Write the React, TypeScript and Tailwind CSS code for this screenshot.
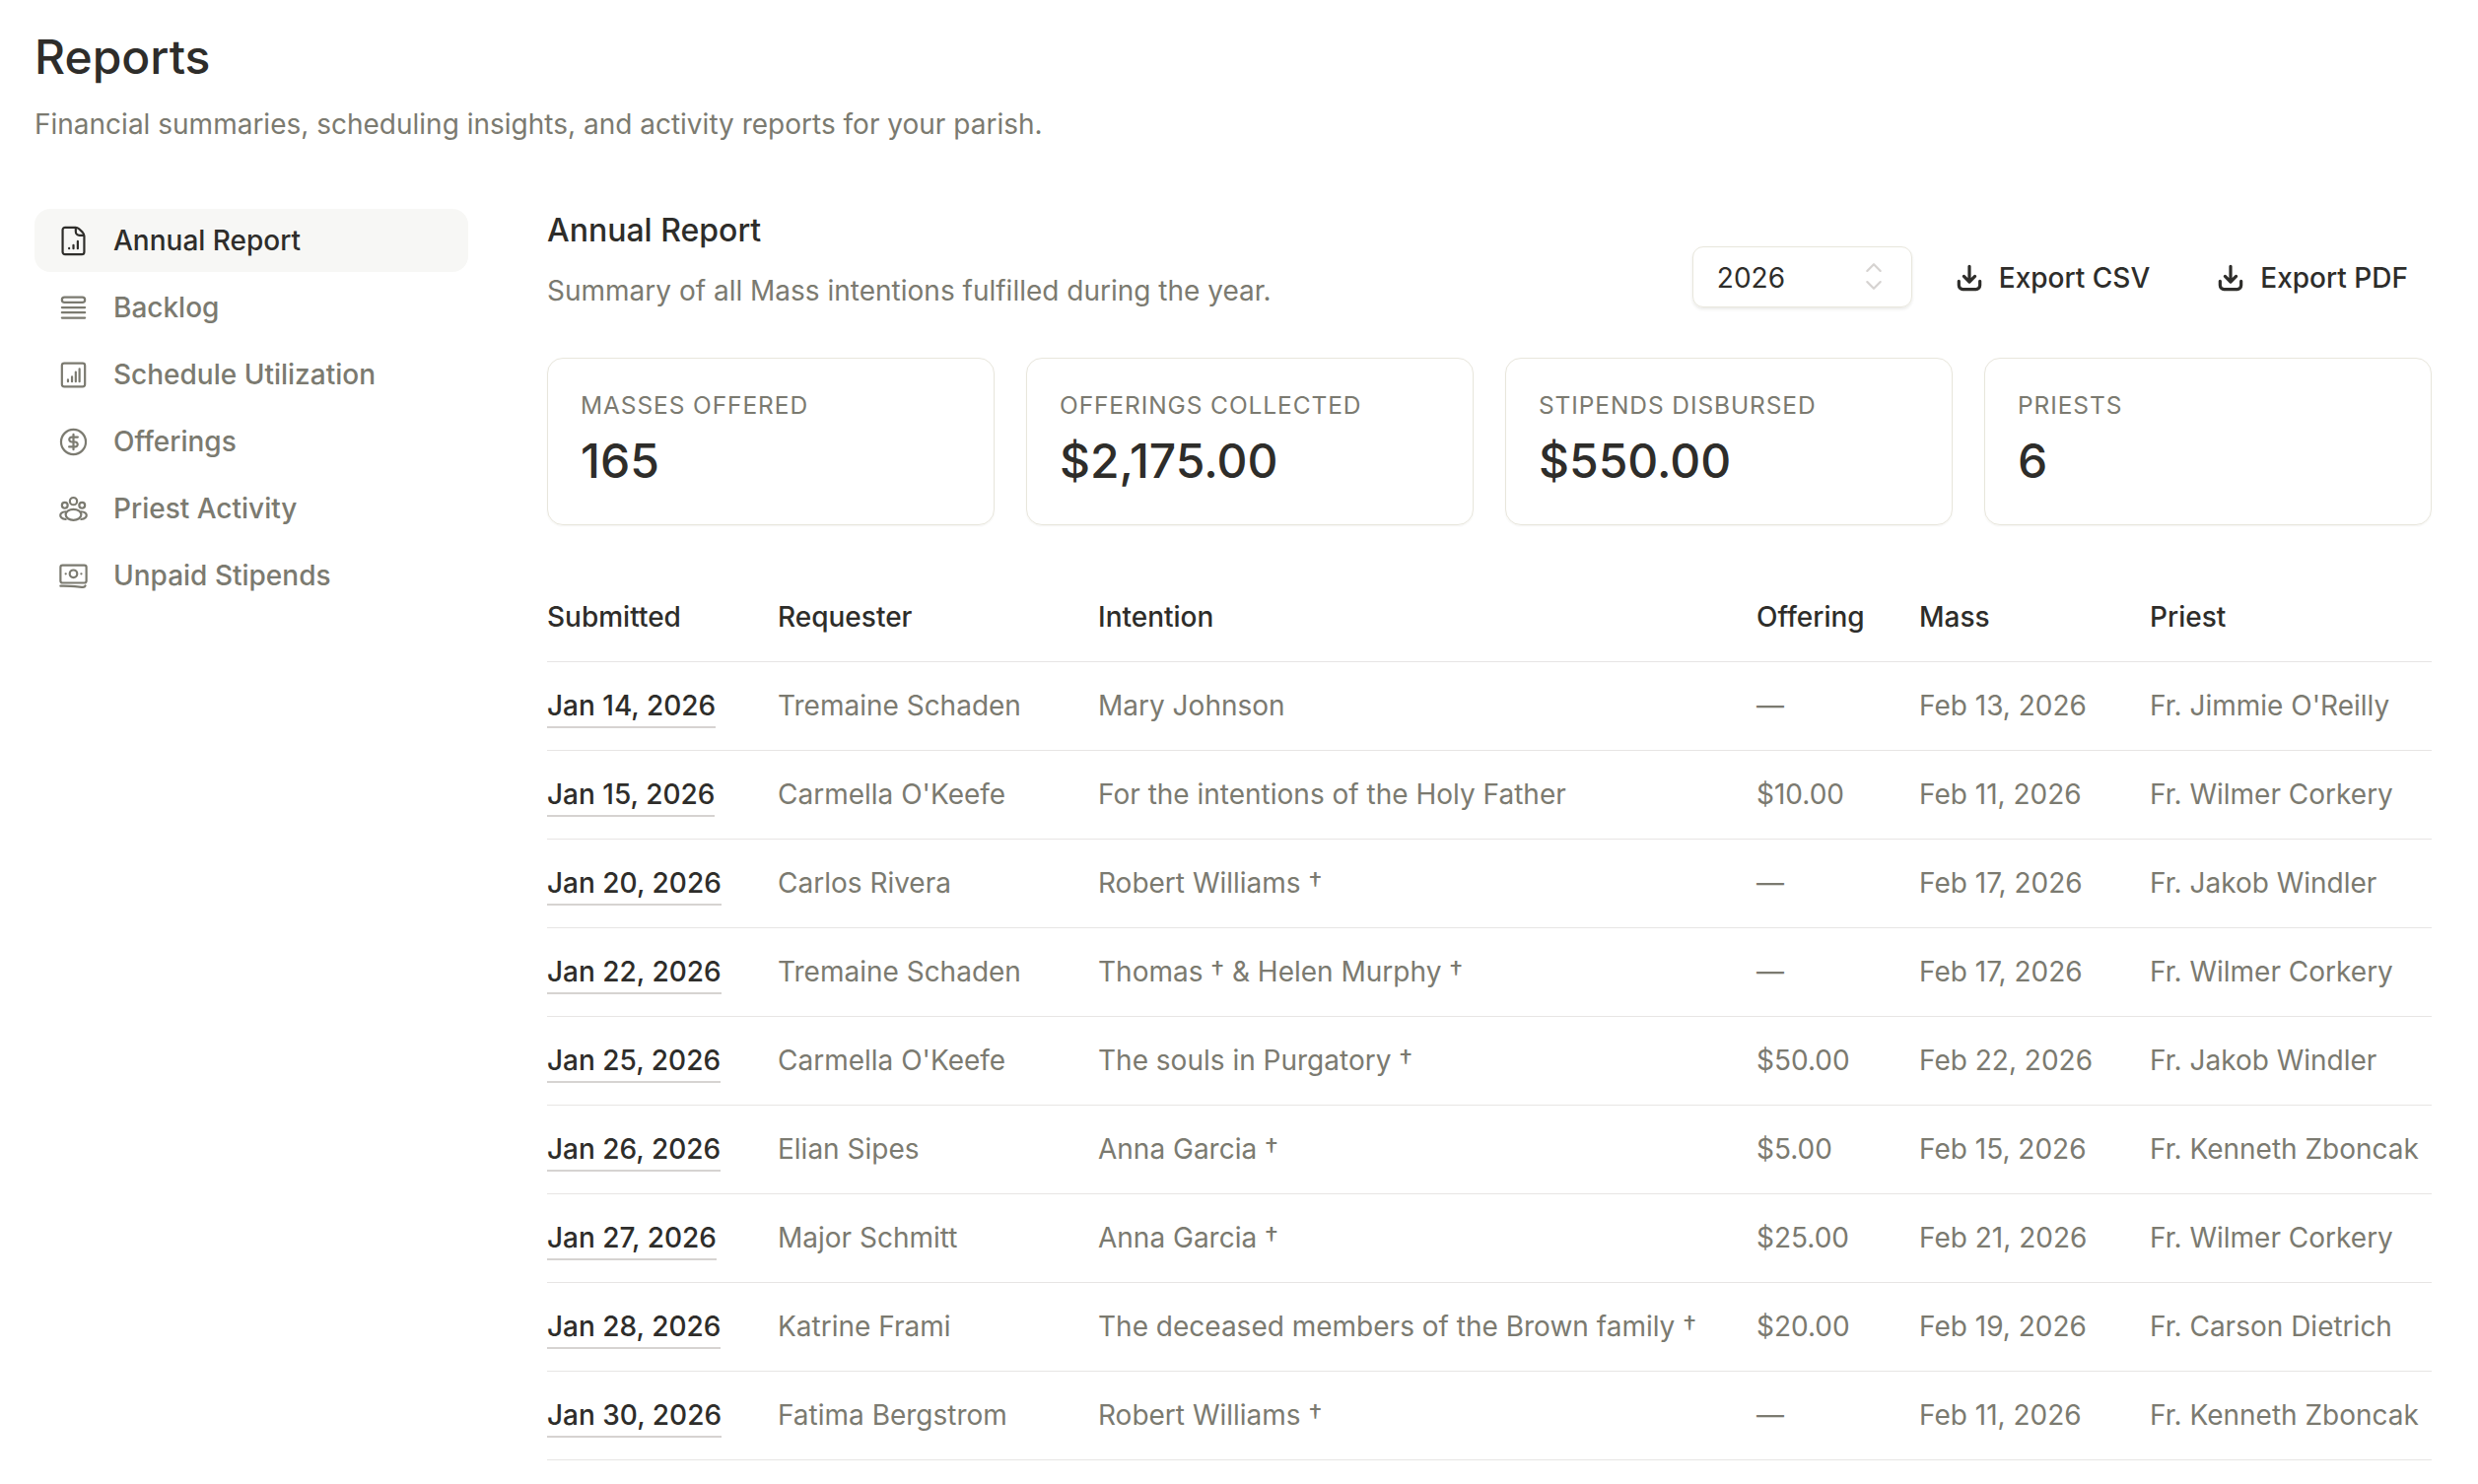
import React from "react";

const F = "[font-family:Inter,sans-serif]";

const Base = ({ children, className = "" }: { children: React.ReactNode; className?: string }) => (
  <svg viewBox="0 0 24 24" fill="none" stroke="currentColor" strokeWidth={1.5} strokeLinecap="round" strokeLinejoin="round" className={"w-[35px] h-[35px] shrink-0 " + className}>
    {children}
  </svg>
);

const IconDoc = () => (
  <Base>
    <path d="M13.5 2.6H6.2A1.7 1.7 0 0 0 4.5 4.3v15.4a1.7 1.7 0 0 0 1.7 1.7h11.6a1.7 1.7 0 0 0 1.7-1.7V8.6c0-1.2-.4-1.8-1.2-2.7l-2.4-2.3c-.8-.7-1.4-1-2.4-1Z" />
    <path d="M13.6 2.8v2.7a2.6 2.6 0 0 0 2.6 2.6h3" />
    <path d="M9 17.3v-.2M12 17.3v-2.4M15 17.3v-5" />
  </Base>
);
const IconBacklog = () => (
  <Base>
    <rect x="4" y="4.6" width="16" height="3.6" rx="1.8" />
    <path d="M4 11.7h16M4 15.2h16M4 18.9h16" />
  </Base>
);
const IconBars = () => (
  <Base>
    <rect x="4" y="3.9" width="16" height="16.2" rx="1.6" />
    <path d="M8.2 16.6v-1.2M11 16.6v-3.4M13.6 16.6V10M16.2 16.6V7.8" />
  </Base>
);
const IconDollar = () => (
  <Base>
    <circle cx="12" cy="12" r="8.6" />
    <path d="M15 8.6h-4.2a1.7 1.7 0 1 0 0 3.4h2.4a1.7 1.7 0 1 1 0 3.4H9M12 6.7v10.6" />
  </Base>
);
const IconGroup = () => (
  <Base>
    <circle cx="12" cy="6.6" r="2.5" />
    <circle cx="6" cy="9.5" r="2" />
    <circle cx="18" cy="9.5" r="2" />
    <ellipse cx="12" cy="16" rx="5.4" ry="3.8" />
    <path d="M6.6 13.9c-2.2.2-3.7 1.2-3.7 2.6s1.5 2.4 3.7 2.7M17.4 13.9c2.2.2 3.7 1.2 3.7 2.6s-1.5 2.4-3.7 2.7" />
  </Base>
);
const IconCash = () => (
  <Base>
    <rect x="3" y="4.6" width="18" height="12.2" rx="1.4" />
    <circle cx="12" cy="10.5" r="2.6" />
    <path d="M6.6 10.5h.1M17.4 10.5h.1" />
    <path d="M3 19c5-.3 11 .4 15.6.8.8 0 1.4-.2 1.7-1" />
  </Base>
);
const IconDownload = () => (
  <svg viewBox="0 0 24 24" fill="none" stroke="currentColor" strokeWidth={2.4} strokeLinecap="round" strokeLinejoin="round" className="w-[32px] h-[32px] shrink-0">
    <path d="M12 3.2v11.6M7.8 10.8l4.2 4.2 4.2-4.2" />
    <path d="M4 14.5v3.2a3 3 0 0 0 3 3h10a3 3 0 0 0 3-3v-3.2" />
  </svg>
);

const nav: [string, React.FC][] = [
  ["Annual Report", IconDoc],
  ["Backlog", IconBacklog],
  ["Schedule Utilization", IconBars],
  ["Offerings", IconDollar],
  ["Priest Activity", IconGroup],
  ["Unpaid Stipends", IconCash],
];

const stats = [
  ["MASSES OFFERED", "165"],
  ["OFFERINGS COLLECTED", "$2,175.00"],
  ["STIPENDS DISBURSED", "$550.00"],
  ["PRIESTS", "6"],
];

const rows: [string, string, string, string, string, string][] = [
  ["Jan 14, 2026", "Tremaine Schaden", "Mary Johnson", "—", "Feb 13, 2026", "Fr. Jimmie O'Reilly"],
  ["Jan 15, 2026", "Carmella O'Keefe", "For the intentions of the Holy Father", "$10.00", "Feb 11, 2026", "Fr. Wilmer Corkery"],
  ["Jan 20, 2026", "Carlos Rivera", "Robert Williams †", "—", "Feb 17, 2026", "Fr. Jakob Windler"],
  ["Jan 22, 2026", "Tremaine Schaden", "Thomas † & Helen Murphy †", "—", "Feb 17, 2026", "Fr. Wilmer Corkery"],
  ["Jan 25, 2026", "Carmella O'Keefe", "The souls in Purgatory †", "$50.00", "Feb 22, 2026", "Fr. Jakob Windler"],
  ["Jan 26, 2026", "Elian Sipes", "Anna Garcia †", "$5.00", "Feb 15, 2026", "Fr. Kenneth Zboncak"],
  ["Jan 27, 2026", "Major Schmitt", "Anna Garcia †", "$25.00", "Feb 21, 2026", "Fr. Wilmer Corkery"],
  ["Jan 28, 2026", "Katrine Frami", "The deceased members of the Brown family †", "$20.00", "Feb 19, 2026", "Fr. Carson Dietrich"],
  ["Jan 30, 2026", "Fatima Bergstrom", "Robert Williams †", "—", "Feb 11, 2026", "Fr. Kenneth Zboncak"],
];

export default function App() {
  return (
    <div className={F + " min-h-[1506px] bg-white text-[#2e2d2a] text-[28px] pl-[35px] pr-[47px] pt-[30px] overflow-hidden"}>
      <h1 className="text-[48px] leading-[56px] font-medium">Reports</h1>
      <p className="mt-[20px] leading-[40px] text-[#7b7a70]">Financial summaries, scheduling insights, and activity reports for your parish.</p>

      <div className="mt-[66px] flex gap-[80px]">
        <nav className="w-[440px] shrink-0 flex flex-col gap-[4px]">
          {nav.map(([label, Icon], i) => (
            <div key={label} className={"h-[64px] rounded-[16px] pl-[22px] flex items-center gap-[23px] font-medium " + (i === 0 ? "bg-[#f7f7f5] text-[#2e2d2a]" : "text-[#7b7a70]")}>
              <Icon />
              <span>{label}</span>
            </div>
          ))}
        </nav>

        <main className="flex-1 min-w-0">
          <div className="flex items-start justify-between">
            <div className="pt-[2px]">
              <h2 className="text-[32px] leading-[40px] font-medium">Annual Report</h2>
              <p className="mt-[21px] leading-[40px] text-[#7b7a70]">Summary of all Mass intentions fulfilled during the year.</p>
            </div>
            <div className="mt-[38px] flex items-center">
              <div className="relative w-[223px] h-[62px] rounded-[11px] border-[1.6px] border-[#e8e6dc] shadow-[0_2px_3px_rgba(60,60,40,0.1)] flex items-center pl-[24px] pt-[1px]">
                2026
                <svg viewBox="0 0 16 26" fill="none" stroke="#d6d3d1" strokeWidth={2} strokeLinecap="round" strokeLinejoin="round" className="absolute right-[29px] top-[15px] w-[18px] h-[29px]">
                  <path d="M2 8l6-6 6 6M2 18l6 6 6-6" />
                </svg>
              </div>
              <button className="ml-[26px] h-[62px] flex items-center gap-[14px] pl-[16px] pr-[25px] pt-[1px] font-medium">
                <IconDownload /> Export CSV
              </button>
              <button className="ml-[25px] h-[62px] flex items-center gap-[14px] pl-[16px] pr-[24px] pt-[1px] font-medium">
                <IconDownload /> Export PDF
              </button>
            </div>
          </div>

          <div className="mt-[48px] grid grid-cols-4 gap-[32px]">
            {stats.map(([k, v]) => (
              <div key={k} className="h-[170px] rounded-[16px] border-[1.6px] border-[#e8e6dc] shadow-[0_1px_2px_rgba(60,60,40,0.06)] px-[33px] pt-[31px]">
                <div className="text-[24.5px] leading-[32px] tracking-[0.9px] text-[#7b7a70]">{k}</div>
                <div className="mt-[9px] text-[48px] leading-[64px] font-medium">{v}</div>
              </div>
            ))}
          </div>

          <table className="mt-[45px] w-full table-fixed border-collapse text-left">
            <thead>
              <tr className="h-[93px] border-b-[1.6px] border-[#e7e5e4]">
                <th className="w-[234px] pt-[4px] font-medium">Submitted</th>
                <th className="w-[325px] pt-[4px] font-medium">Requester</th>
                <th className="w-[668px] pt-[4px] font-medium">Intention</th>
                <th className="w-[165px] pt-[4px] font-medium">Offering</th>
                <th className="w-[234px] pt-[4px] font-medium">Mass</th>
                <th className="pt-[4px] font-medium">Priest</th>
              </tr>
            </thead>
            <tbody className="text-[#7b7a70]">
              {rows.map((r) => (
                <tr key={r[0]} className="h-[90px] border-b-[1.6px] border-[#e7e5e4]">
                  <td><span className="block w-fit leading-[36px] pt-[5px] pb-[3px] border-b-[2px] border-[#d6d3d1] text-[#2e2d2a] font-medium">{r[0]}</span></td>
                  <td>{r[1]}</td>
                  <td className="whitespace-nowrap">{r[2]}</td>
                  <td>{r[3]}</td>
                  <td>{r[4]}</td>
                  <td className="whitespace-nowrap">{r[5]}</td>
                </tr>
              ))}
            </tbody>
          </table>
        </main>
      </div>
    </div>
  );
}
